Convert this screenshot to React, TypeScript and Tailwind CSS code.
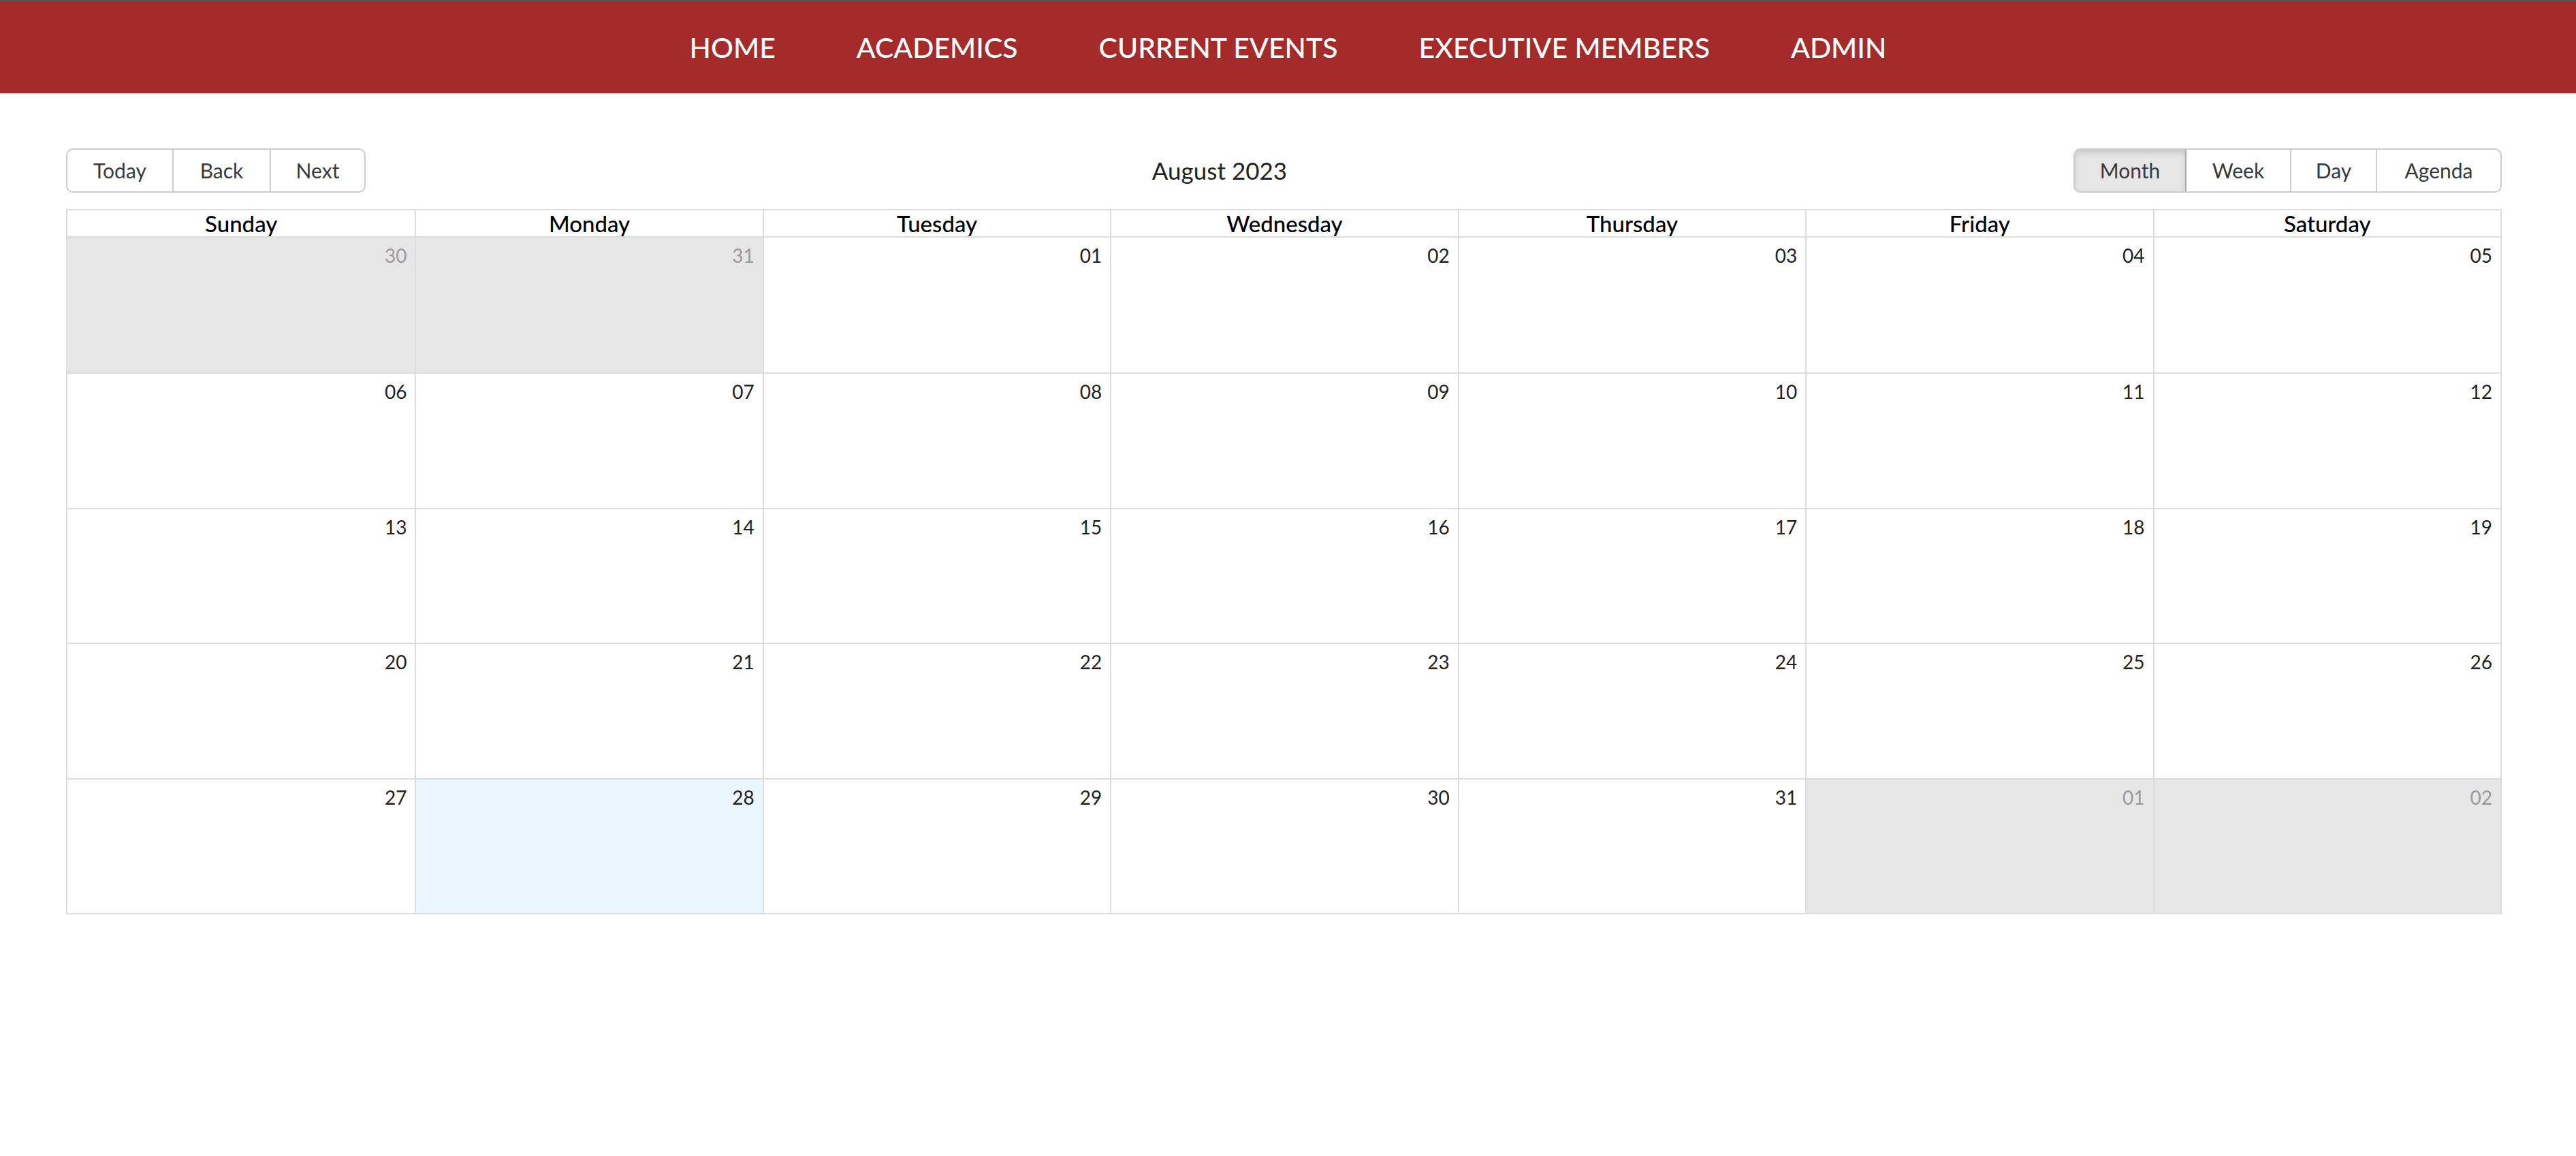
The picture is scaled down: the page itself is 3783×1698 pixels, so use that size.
import React from 'react';

const navItems = ['HOME', 'ACADEMICS', 'CURRENT EVENTS', 'EXECUTIVE MEMBERS', 'ADMIN'];
const dayNames = ['Sunday', 'Monday', 'Tuesday', 'Wednesday', 'Thursday', 'Friday', 'Saturday'];

type Cell = { label: string; off: boolean; today: boolean };

function buildDays(): Cell[] {
  const cells: Cell[] = [];
  cells.push({ label: '30', off: true, today: false });
  cells.push({ label: '31', off: true, today: false });
  for (let d = 1; d <= 31; d++) {
    cells.push({ label: String(d).padStart(2, '0'), off: false, today: d === 28 });
  }
  cells.push({ label: '01', off: true, today: false });
  cells.push({ label: '02', off: true, today: false });
  return cells;
}

export default function App() {
  const days = buildDays();
  const weeks: Cell[][] = [];
  for (let i = 0; i < days.length; i += 7) weeks.push(days.slice(i, i + 7));

  return (
    <div className="min-h-screen bg-white font-['Lato','Open_Sans',sans-serif] text-[#373a3c]">
      <nav className="flex h-[137px] items-center justify-center gap-[119px] border-t-2 border-[#555] bg-[#a52a2a]">
        {navItems.map((item) => (
          <a key={item} className="text-[41px] font-medium text-white">
            {item}
          </a>
        ))}
      </nav>

      <div className="pl-[97px] pr-[109px] pt-[81px]">
        <div className="mb-[24px] flex items-center">
          <div className="flex h-[65px] overflow-hidden rounded-[10px] border-2 border-[#ccc] text-[30px]">
            <button className="w-[156px] border-r-2 border-[#ccc]">Today</button>
            <button className="w-[143px] border-r-2 border-[#ccc]">Back</button>
            <button className="w-[137px]">Next</button>
          </div>
          <div className="flex-1 text-center text-[35px] text-[#222]">August 2023</div>
          <div className="flex h-[65px] overflow-hidden rounded-[10px] border-2 border-[#ccc] text-[30px]">
            <button className="w-[164px] border-r-2 border-[#adadad] bg-[#e6e6e6] shadow-[inset_0_4px_8px_rgba(0,0,0,0.15)]">
              Month
            </button>
            <button className="w-[154px] border-r-2 border-[#ccc]">Week</button>
            <button className="w-[126px] border-r-2 border-[#ccc]">Day</button>
            <button className="w-[181px]">Agenda</button>
          </div>
        </div>

        <div className="border-2 border-[#ddd]">
          <div className="grid h-[40px] grid-cols-7 border-b-2 border-[#ddd]">
            {dayNames.map((name, i) => (
              <div
                key={name}
                className={`flex items-center justify-center text-[33px] font-medium leading-none text-black ${
                  i > 0 ? 'border-l-2 border-[#ddd]' : ''
                }`}
              >
                {name}
              </div>
            ))}
          </div>
          {weeks.map((week, w) => (
            <div key={w} className={`grid h-[198.4px] grid-cols-7 ${w > 0 ? 'border-t-2 border-[#ddd]' : ''}`}>
              {week.map((cell, i) => (
                <div
                  key={i}
                  className={`pr-[12px] pt-[9px] text-right text-[28px] leading-[34px] ${
                    i > 0 ? 'border-l-2 border-[#ddd]' : ''
                  } ${cell.off ? 'bg-[#e6e6e6] text-[#999]' : cell.today ? 'bg-[#eaf6ff] text-[#222]' : 'text-[#222]'}`}
                >
                  {cell.label}
                </div>
              ))}
            </div>
          ))}
        </div>
      </div>
    </div>
  );
}
